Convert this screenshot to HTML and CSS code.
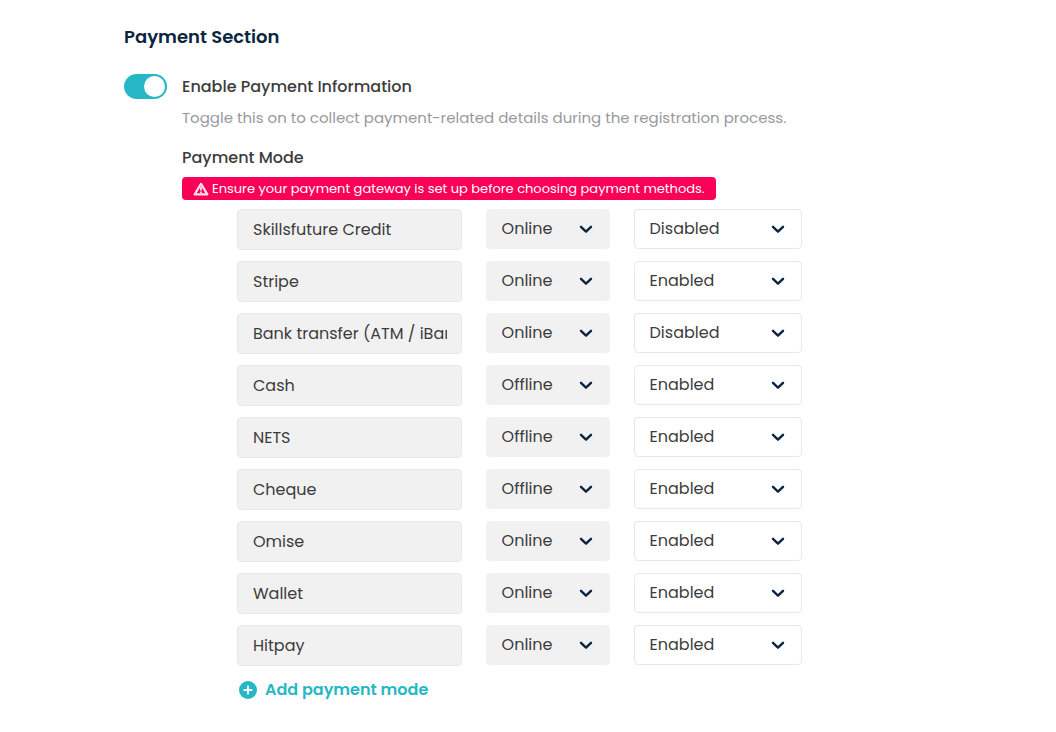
FILE: index.html
```html
<!DOCTYPE html>
<html lang="en">
<head>
    <meta charset="utf-8">
    <meta name="viewport" content="width=device-width, initial-scale=1">
    <title>Payment Section</title>
    <link rel="stylesheet" href="styles.css">
</head>
<body>
<svg class="icon-defs" aria-hidden="true">
    <symbol id="chevron" viewBox="0 0 14 9">
        <path d="M2 1.8l5 4.8 5-4.8" fill="none" stroke="#0b2540" stroke-width="2.4" stroke-linecap="round" stroke-linejoin="round"/>
    </symbol>
</svg>

<main class="payment-section">
    <h1 class="section-title">Payment Section</h1>

    <div class="setting">
        <input type="checkbox" class="toggle" id="enablePayment" checked>
        <div class="setting-body">
            <label class="setting-label" for="enablePayment">Enable Payment Information</label>
            <p class="setting-help">Toggle this on to collect payment-related details during the registration process.</p>

            <h2 class="mode-title">Payment Mode</h2>
            <p class="alert">
                <svg class="alert-icon" viewBox="0 0 16 14" aria-hidden="true">
                    <path d="M8 1.8L14.3 12.4H1.7z" fill="none" stroke="#ffe3ee" stroke-width="2.2" stroke-linejoin="round"/>
                    <path d="M8 5v3.6M8 9.6v1.6" fill="none" stroke="#ffe3ee" stroke-width="1.8"/>
                </svg>
                Ensure your payment gateway is set up before choosing payment methods.
            </p>

            <div class="mode-list" id="modeList"></div>

            <button type="button" class="add-mode" id="addMode">
                <svg class="add-icon" viewBox="0 0 18 18" aria-hidden="true">
                    <circle cx="9" cy="9" r="9" fill="#26b7c5"/>
                    <path d="M9 5.2v7.6M5.2 9h7.6" stroke="#fff" stroke-width="1.8" stroke-linecap="round"/>
                </svg>
                Add payment mode
            </button>
        </div>
    </div>
</main>

<script src="script.js"></script>
</body>
</html>
```
FILE: styles.css
```css
* {
    box-sizing: border-box;
}
body {
    margin: 0;
    background-color: #fff;
    color: #3c3c3c;
    font-family: Poppins, Inter, "Liberation Sans", sans-serif;
    font-size: 16px;
    line-height: 24px;
}
h1, h2, p {
    margin: 0;
}
.icon-defs {
    display: none;
}
.payment-section {
    padding: 24px 124px;
}
.section-title {
    margin-bottom: 25px;
    color: #0b2540;
    font-size: 18px;
    font-weight: 600;
    line-height: 25px;
}
.setting {
    display: flex;
    align-items: flex-start;
    gap: 15px;
}
.toggle {
    appearance: none;
    display: flex;
    flex: none;
    justify-content: flex-end;
    align-items: center;
    width: 43px;
    height: 25px;
    margin: 0;
    padding: 2px;
    border-radius: 13px;
    background-color: #26b7c5;
    cursor: pointer;
}
.toggle::before {
    content: "";
    width: 21px;
    height: 21px;
    border-radius: 50%;
    background-color: #fff;
}
.toggle:not(:checked) {
    justify-content: flex-start;
    background-color: #c4c4c4;
}
.setting-body {
    flex: 1;
}
.setting-label {
    display: block;
    font-weight: 500;
    line-height: 26px;
}
.setting-help {
    margin-top: 6px;
    color: #98989f;
    font-size: 15px;
}
.mode-title {
    margin-top: 16px;
    font-size: 16px;
    font-weight: 500;
}
.alert {
    display: flex;
    align-items: center;
    gap: 3px;
    width: fit-content;
    margin-top: 7px;
    padding: 0 11px;
    border-radius: 4px;
    background-color: #fb0057;
    color: #fff;
    font-size: 13px;
    line-height: 23px;
}
.alert-icon {
    flex: none;
    width: 16px;
    height: 14px;
}
.mode-list {
    display: grid;
    gap: 11px;
    margin: 9px 0 0 55px;
}
.mode-row {
    display: grid;
    grid-template-columns: 4fr 124px 3fr;
    align-items: start;
    gap: 24px;
    max-width: 565px;
}
.mode-name, .select {
    width: 100%;
    height: 40px;
    border: 1px solid #e8e8e8;
    border-radius: 4px;
    background-color: #fff;
    color: #3c3c3c;
    font: inherit;
}
.mode-name {
    height: 41px;
    padding: 0 14px 0 15px;
    background-color: #f1f1f1;
}
.select-wrap {
    position: relative;
}
.select {
    appearance: none;
    display: block;
    padding: 0 40px 0 15px;
    opacity: 1;
}
.select:disabled {
    border-color: #f1f1f1;
    background-color: #f1f1f1;
}
.select-arrow {
    position: absolute;
    top: 16px;
    right: 17px;
    width: 14px;
    height: 9px;
    pointer-events: none;
}
.add-mode {
    display: flex;
    align-items: center;
    gap: 8px;
    margin: 12px 0 0 57px;
    padding: 0;
    border: 0;
    background: none;
    color: #26b7c5;
    font: inherit;
    font-weight: 600;
    cursor: pointer;
}
.add-icon {
    width: 18px;
    height: 18px;
}
```
FILE: script.js
```js
const modes = [
    ['Skillsfuture Credit', 'Online', 'Disabled'],
    ['Stripe', 'Online', 'Enabled'],
    ['Bank transfer (ATM / iBanking)', 'Online', 'Disabled'],
    ['Cash', 'Offline', 'Enabled'],
    ['NETS', 'Offline', 'Enabled'],
    ['Cheque', 'Offline', 'Enabled'],
    ['Omise', 'Online', 'Enabled'],
    ['Wallet', 'Online', 'Enabled'],
    ['Hitpay', 'Online', 'Enabled']
];

function selectHtml(label, options, value, disabled) {
    const items = options.map(o => `<option${o === value ? ' selected' : ''}>${o}</option>`).join('');
    return `<div class="select-wrap">
        <select class="select" aria-label="${label}"${disabled ? ' disabled' : ''}>${items}</select>
        <svg class="select-arrow" aria-hidden="true"><use href="#chevron"/></svg>
    </div>`;
}

function addRow(name, type, status, locked) {
    const row = document.createElement('div');
    row.className = 'mode-row';
    row.innerHTML = `<input type="text" class="mode-name" aria-label="Payment mode" value="${name}"${locked ? ' readonly' : ''}>`
        + selectHtml('Type', ['Online', 'Offline'], type, locked)
        + selectHtml('Status', ['Enabled', 'Disabled'], status, false);
    document.getElementById('modeList').appendChild(row);
}

modes.forEach(m => addRow(m[0], m[1], m[2], true));

document.getElementById('addMode').addEventListener('click', () => addRow('', 'Offline', 'Enabled', false));
```
